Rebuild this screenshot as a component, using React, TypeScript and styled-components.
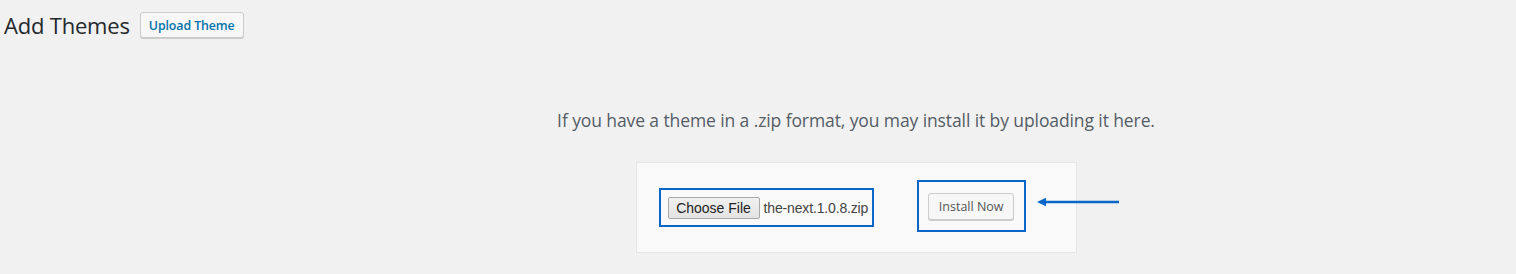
import React from "react";
import styled, { createGlobalStyle } from "styled-components";

const GlobalStyle = createGlobalStyle`
  body {
    margin: 0;
    background-color: #f1f1f1;
    font-family: "Open Sans", "Noto Sans", sans-serif;
    color: #444;
  }
`;

export default function App() {
  return (
    <>
      <GlobalStyle />
      <Page>
        <HeaderRow>
          <Title>Add Themes</Title>
          <UploadButton>Upload Theme</UploadButton>
        </HeaderRow>
        <UploadSection>
          <Description>
            If you have a theme in a .zip format, you may install it by uploading it here.
          </Description>
          <UploadCard>
            <Highlight $padding="7px 4px 6px 7px">
              <ChooseButton>Choose File</ChooseButton>
              <FileName>the-next.1.0.8.zip</FileName>
            </Highlight>
            <Highlight $padding="11px 10px 10px 9px" $lift={4}>
              <InstallButton>Install Now</InstallButton>
            </Highlight>
            <Arrow width="82" height="10" viewBox="0 0 82 10">
              <line x1="7" y1="5" x2="82" y2="5" stroke="#0a66c8" strokeWidth="2.4" />
              <polygon points="0,5 9,0.8 9,9.2" fill="#0a66c8" />
            </Arrow>
          </UploadCard>
        </UploadSection>
      </Page>
    </>
  );
}

const Page = styled.div`
  width: 1516px;
  height: 274px;
  overflow: hidden;
`;

const HeaderRow = styled.div`
  display: flex;
  align-items: center;
  gap: 10px;
  padding: 12px 0 0 4px;
`;

const Title = styled.h1`
  margin: 0;
  font-size: 22px;
  font-weight: 400;
  line-height: 26px;
  color: #23282d;
  letter-spacing: -0.2px;
`;

const UploadButton = styled.button`
  box-sizing: border-box;
  width: 104px;
  height: 26px;
  padding: 0;
  border: 1px solid #ccc;
  border-radius: 3px;
  background: #f7f7f7;
  box-shadow: 0 1px 0 #ccc;
  color: #0073aa;
  font-family: "Open Sans", "Noto Sans", sans-serif;
  font-size: 12.4px;
  font-weight: 600;
  letter-spacing: -0.1px;
  cursor: pointer;
`;

const UploadSection = styled.div`
  margin-left: 196px;
  display: flex;
  flex-direction: column;
  align-items: center;
`;

const Description = styled.p`
  margin: 69px 0 0;
  font-size: 17.5px;
  line-height: 26px;
  color: #555d66;
  letter-spacing: -0.1px;
`;

const UploadCard = styled.div`
  position: relative;
  box-sizing: border-box;
  width: 441px;
  height: 91px;
  margin-top: 29px;
  padding-left: 22px;
  display: flex;
  align-items: center;
  gap: 43px;
  background: #f9f9f9;
  border: 1px solid #e5e5e5;
`;

const Highlight = styled.div<{ $padding: string; $lift?: number }>`
  display: flex;
  align-items: center;
  padding: ${(p) => p.$padding};
  margin-bottom: ${(p) => p.$lift ?? 0}px;
  border: 2px solid #0a66c8;
`;

const ChooseButton = styled.button`
  box-sizing: border-box;
  width: 92px;
  height: 22px;
  padding: 0;
  border: 1px solid #a9a9a9;
  border-radius: 2px;
  background: linear-gradient(#f0f0f0, #e3e3e3);
  font-family: "Liberation Sans", Arial, sans-serif;
  font-size: 14px;
  color: #222;
`;

const FileName = styled.span`
  margin-left: 4px;
  font-family: "Liberation Sans", Arial, sans-serif;
  font-size: 14px;
  letter-spacing: -0.15px;
  color: #444;
`;

const InstallButton = styled.button`
  box-sizing: border-box;
  width: 86px;
  height: 27px;
  padding: 0;
  border: 1px solid #ccc;
  border-radius: 3px;
  background: #f7f7f7;
  box-shadow: 0 1px 0 #ccc;
  font-family: "Open Sans", "Noto Sans", sans-serif;
  font-size: 12.5px;
  color: #555;
`;

const Arrow = styled.svg`
  position: absolute;
  left: 400px;
  top: 34px;
`;
